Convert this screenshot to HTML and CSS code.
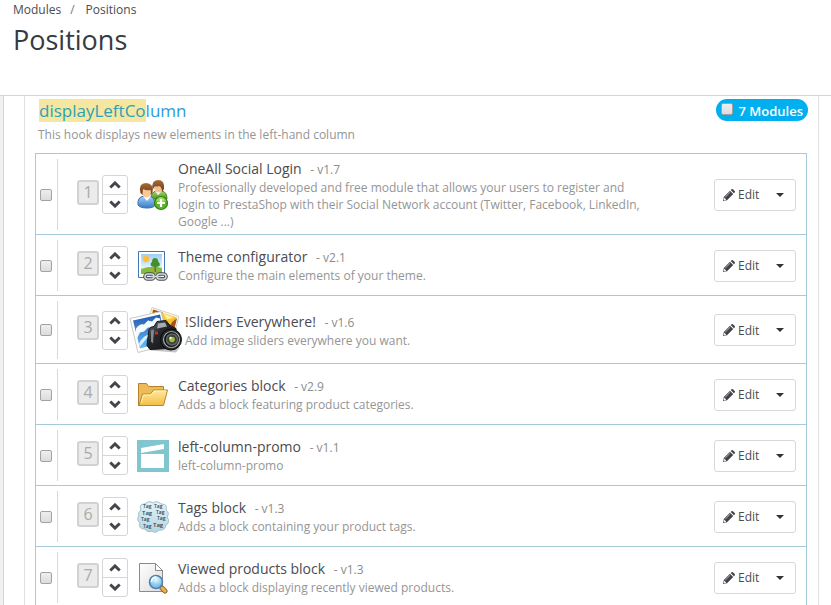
FILE: index.html
```html
<!DOCTYPE html>
<html lang="en">
<head>
  <meta charset="UTF-8" />
  <meta name="viewport" content="width=device-width, initial-scale=1.0" />
  <title>Positions</title>
  <link rel="stylesheet" href="styles.css">
</head>
<body>
  <!-- shared icons -->
  <svg class="sprite" aria-hidden="true">
    <symbol id="up" viewBox="0 0 12 8"><path d="M1.300 6.500 6 1.900l4.700 4.600" fill="none" stroke="#45454d" stroke-width="2.900"/></symbol>
    <symbol id="down" viewBox="0 0 12 8"><path d="M1.300 1.500 6 6.100l4.700-4.600" fill="none" stroke="#45454d" stroke-width="2.900"/></symbol>
    <symbol id="pencil" viewBox="0 0 12 12"><path d="M0 12l.8-4L7 1.800 10.200 5 4 11.200zM7.700 1.100 8.500.3q.7-.6 1.400 0l1.800 1.800q.6.700 0 1.400l-.8.800z" fill="#414149"/><path d="M1.300 9l1.700 1.700-1.500.4-.6-.6zM2.300 8l5-4.900" stroke="#fff" stroke-width=".6" fill="#fff"/></symbol>
  </svg>

  <header class="page-head">
    <nav class="breadcrumb" aria-label="Breadcrumb">
      <a href="#">Modules</a><span class="slash">/</span><a href="#">Positions</a>
    </nav>
    <h1>Positions</h1>
  </header>

  <main class="content">
    <section class="panel">
      <div class="hook-head">
        <h2><a href="#"><mark>displayLeftCo</mark>lumn</a></h2>
        <label class="pill"><input type="checkbox" class="check" /> <span>7 Modules</span></label>
      </div>
      <p class="hook-desc">This hook displays new elements in the left-hand column</p>

      <ul class="modules">
        <li class="module">
          <div class="select"><input type="checkbox" class="check" aria-label="Select OneAll Social Login" /></div>
          <span class="position">1</span>
          <div class="arrows">
            <button type="button" aria-label="Move up"><svg><use href="#up"/></svg></button>
            <button type="button" aria-label="Move down"><svg><use href="#down"/></svg></button>
          </div>
          <svg class="icon" viewBox="0 0 32 32">
            <defs>
              <linearGradient id="hair" x2="0" y2="1"><stop stop-color="#a66b38"/><stop offset="1" stop-color="#6b3a17"/></linearGradient>
              <linearGradient id="blue" x2="0" y2="1"><stop stop-color="#a9d3f8"/><stop offset="1" stop-color="#3779c5"/></linearGradient>
              <linearGradient id="green" x2="0" y2="1"><stop stop-color="#a5d872"/><stop offset="1" stop-color="#4f9226"/></linearGradient>
            </defs>
            <path d="M14 20q0-7 5-8h6q5 1 5 8z" fill="url(#green)" stroke="#518329"/>
            <path d="M18 12l3 4 4-4z" fill="#fff"/>
            <ellipse cx="21.500" cy="8" rx="4.500" ry="5.500" fill="#f4c18e"/>
            <path d="M15.500 11Q14 1 21 1q7 0 6 9l-2 3q0-5-3-6-3 1-4 0z" fill="url(#hair)"/>
            <path d="M1 26q-1-8 6-9h5q6 1 6 9-1 3-8 3t-9-3z" fill="url(#blue)" stroke="#3470b0"/>
            <path d="M6 17l4 5 4-5z" fill="#fff"/>
            <ellipse cx="9.500" cy="12.500" rx="5" ry="6" fill="#f9c995"/>
            <path d="M3.500 14Q1 4 9 4t6.500 10l-2 2q1-3 0-5-5 1-7-1-1 1-1 6z" fill="url(#hair)"/>
            <circle cx="24" cy="24" r="6.500" fill="#59b526" stroke="#32810f" stroke-width="1.200"/>
            <path d="M19 22q2-4 5-4t5 4q-5 2-10 0z" fill="#9adb63"/>
            <path d="M24 20v8m-4-4h8" stroke="#fff" stroke-width="2.200"/>
          </svg>
          <div class="info">
            <h3>OneAll Social Login <small>- v1.7</small></h3>
            <p>Professionally developed and free module that allows your users to register and login to PrestaShop with their Social Network account (Twitter, Facebook, LinkedIn, Google ...)</p>
          </div>
          <div class="actions">
            <button type="button" class="edit"><svg><use href="#pencil"/></svg>Edit</button>
            <button type="button" class="more" aria-label="More actions"></button>
          </div>
        </li>

        <li class="module">
          <div class="select"><input type="checkbox" class="check" aria-label="Select Theme configurator" /></div>
          <span class="position">2</span>
          <div class="arrows">
            <button type="button" aria-label="Move up"><svg><use href="#up"/></svg></button>
            <button type="button" aria-label="Move down"><svg><use href="#down"/></svg></button>
          </div>
          <svg class="icon" viewBox="0 0 32 32">
            <defs>
              <linearGradient id="sky" x2="0" y2="1"><stop stop-color="#9fcef4"/><stop offset="1" stop-color="#e9f7ff"/></linearGradient>
            </defs>
            <path d="M1.500 1.500h26v26h-26z" fill="#fff" stroke="#3d77b8"/>
            <path d="M4 4h21v15H4z" fill="url(#sky)"/>
            <circle cx="9" cy="9" r="3.200" fill="#ffbd3e"/>
            <path d="M4 19q11-4 21-1v6H4z" fill="#87bb3c"/>
            <path d="M17.500 14h1.500v8h-1.500z" fill="#8c5b28"/>
            <path d="M14 16q-1-3 1-4 0-4 3-4t3.500 4q2 1 1 4-4 2-8.500 0z" fill="#428e2f"/>
            <g fill="none" stroke="#484e56" stroke-width="3.600"><rect x="8" y="24" width="9" height="5" rx="2.500"/><rect x="20" y="24" width="9" height="5" rx="2.500"/><path d="M13 26.500h11"/></g>
            <g fill="none" stroke="#d5d8dd" stroke-width="1.500"><rect x="8" y="24" width="9" height="5" rx="2.500"/><rect x="20" y="24" width="9" height="5" rx="2.500"/><path d="M13 26.500h11"/></g>
          </svg>
          <div class="info">
            <h3>Theme configurator <small>- v2.1</small></h3>
            <p>Configure the main elements of your theme.</p>
          </div>
          <div class="actions">
            <button type="button" class="edit"><svg><use href="#pencil"/></svg>Edit</button>
            <button type="button" class="more" aria-label="More actions"></button>
          </div>
        </li>

        <li class="module">
          <div class="select"><input type="checkbox" class="check" aria-label="Select Sliders Everywhere" /></div>
          <span class="position">3</span>
          <div class="arrows">
            <button type="button" aria-label="Move up"><svg><use href="#up"/></svg></button>
            <button type="button" aria-label="Move down"><svg><use href="#down"/></svg></button>
          </div>
          <svg class="icon icon-large" viewBox="0 0 57 57">
            <defs>
              <linearGradient id="deep" x2="0" y2="1"><stop stop-color="#2459b3"/><stop offset="1" stop-color="#64bdf2"/></linearGradient>
              <linearGradient id="sunset" x2="0" y2="1"><stop stop-color="#ffd52e"/><stop offset="1" stop-color="#e5870d"/></linearGradient>
              <linearGradient id="body" x2="1" y2="1"><stop stop-color="#777b82"/><stop offset=".4" stop-color="#25272b"/><stop offset="1" stop-color="#111"/></linearGradient>
            </defs>
            <path d="M25 6l27 9-8 29-27-9z" fill="#fff" stroke="#ccc"/>
            <path d="M26 8l24 8-6 20-25-7z" fill="url(#sunset)"/>
            <path d="M26 8l10 3-6 4 9 1 2 7 9-6-5 20-21-9z" fill="#a3531c"/>
            <path d="M33 11l15 5-5 8-8-3z" fill="#f9c22e"/>
            <path d="M36 12l11 4-7 2z" fill="#fff09a"/>
            <path d="M3 17l31-7 8 33-31 8z" fill="#fff" stroke="#c8c8c8"/>
            <path d="M6 19l27-6 6 27-26 7z" fill="url(#deep)"/>
            <path d="M9 27q4-5 8-4l4-4 4 1 4-4 4 1 1 5-5 0-3 4-5 0-4 4-4 1-4 8z" fill="#f4fbff"/>
            <path d="M12 42q5-9 11-9l-5 6-5 6z" fill="#d7f0ff"/>
            <path d="M23 49l26 2 4-5-24-5z" fill="#555" opacity=".35"/>
            <path d="M22 28q1-3 5-3l3-5 9-1 4 5 6 3 1 16-8 4-19 1-3-4z" fill="url(#body)" stroke="#17181a"/>
            <path d="M31 22l7-1 2 4-10 2z" fill="#a8abb0"/>
            <path d="M24 29l3-1-1 14-2-2z" fill="#858991"/>
            <path d="M28 30h3v3h-3z" fill="#d6281d"/>
            <circle cx="44" cy="38" r="10.500" fill="#25272a" stroke="#07080a"/>
            <circle cx="44.500" cy="38" r="8" fill="#111" stroke="#a5a8ac" stroke-width="1.200"/>
            <circle cx="45" cy="38" r="5.500" fill="#38443d" stroke="#636663" stroke-width="1.500"/>
            <circle cx="45" cy="38" r="2.800" fill="#a7b943"/><circle cx="43.500" cy="36.500" r="1.200" fill="#efffc0"/>
          </svg>
          <div class="info">
            <h3>!Sliders Everywhere! <small>- v1.6</small></h3>
            <p>Add image sliders everywhere you want.</p>
          </div>
          <div class="actions">
            <button type="button" class="edit"><svg><use href="#pencil"/></svg>Edit</button>
            <button type="button" class="more" aria-label="More actions"></button>
          </div>
        </li>

        <li class="module">
          <div class="select"><input type="checkbox" class="check" aria-label="Select Categories block" /></div>
          <span class="position">4</span>
          <div class="arrows">
            <button type="button" aria-label="Move up"><svg><use href="#up"/></svg></button>
            <button type="button" aria-label="Move down"><svg><use href="#down"/></svg></button>
          </div>
          <svg class="icon" viewBox="0 0 32 32">
            <defs>
              <linearGradient id="folder" x2="0" y2="1"><stop stop-color="#ffeb9b"/><stop offset="1" stop-color="#f3bd48"/></linearGradient>
            </defs>
            <path d="M1.500 27V4.500h8l2 3h15v6" fill="#edbb58" stroke="#b9802a"/>
            <path d="M2 26.500L5.500 15h8l3-4h14l-4 15.500z" fill="url(#folder)" stroke="#bd842b"/>
            <path d="M4 24l2.500-8H14l3-4h12" fill="none" stroke="#fff4b9"/>
          </svg>
          <div class="info">
            <h3>Categories block <small>- v2.9</small></h3>
            <p>Adds a block featuring product categories.</p>
          </div>
          <div class="actions">
            <button type="button" class="edit"><svg><use href="#pencil"/></svg>Edit</button>
            <button type="button" class="more" aria-label="More actions"></button>
          </div>
        </li>

        <li class="module">
          <div class="select"><input type="checkbox" class="check" aria-label="Select left-column-promo" /></div>
          <span class="position">5</span>
          <div class="arrows">
            <button type="button" aria-label="Move up"><svg><use href="#up"/></svg></button>
            <button type="button" aria-label="Move down"><svg><use href="#down"/></svg></button>
          </div>
          <svg class="icon" viewBox="0 0 32 32">
            <path d="M0 0h32v32H0z" fill="#81c5cf"/>
            <path d="M4 8l23-4v5L4 13zM4 14h23v14H4z" fill="#fff"/>
          </svg>
          <div class="info">
            <h3>left-column-promo <small>- v1.1</small></h3>
            <p>left-column-promo</p>
          </div>
          <div class="actions">
            <button type="button" class="edit"><svg><use href="#pencil"/></svg>Edit</button>
            <button type="button" class="more" aria-label="More actions"></button>
          </div>
        </li>

        <li class="module">
          <div class="select"><input type="checkbox" class="check" aria-label="Select Tags block" /></div>
          <span class="position">6</span>
          <div class="arrows">
            <button type="button" aria-label="Move up"><svg><use href="#up"/></svg></button>
            <button type="button" aria-label="Move down"><svg><use href="#down"/></svg></button>
          </div>
          <svg class="icon" viewBox="0 0 32 32">
            <defs>
              <linearGradient id="cloud" x2="0" y2="1"><stop stop-color="#e5f3f8"/><stop offset="1" stop-color="#b2d6e4"/></linearGradient>
            </defs>
            <path d="M4 9Q1 3 8 3q4-4 8-1 4-3 8 1 7 0 5 6 4 3 1 7 4 5-1 8-1 6-7 5-4 4-7 1-5 2-7-2-7 0-5-6-4-3-1-7-2-3 2-6z" fill="url(#cloud)" stroke="#a0bec9"/>
            <g class="tag-words">
              <text x="6" y="7" class="tag-small">Tag</text><text x="17" y="7" class="tag-small">Tag</text>
              <text x="5" y="14">Tag</text><text x="19" y="13" class="tag-small">Tag</text>
              <text x="4" y="20" class="tag-small">Tag</text><text x="20" y="19" class="tag-small">Tag</text>
              <text x="6" y="27" class="tag-small">Tag</text><text x="16" y="26">Tag</text>
            </g>
          </svg>
          <div class="info">
            <h3>Tags block <small>- v1.3</small></h3>
            <p>Adds a block containing your product tags.</p>
          </div>
          <div class="actions">
            <button type="button" class="edit"><svg><use href="#pencil"/></svg>Edit</button>
            <button type="button" class="more" aria-label="More actions"></button>
          </div>
        </li>

        <li class="module">
          <div class="select"><input type="checkbox" class="check" aria-label="Select Viewed products block" /></div>
          <span class="position">7</span>
          <div class="arrows">
            <button type="button" aria-label="Move up"><svg><use href="#up"/></svg></button>
            <button type="button" aria-label="Move down"><svg><use href="#down"/></svg></button>
          </div>
          <svg class="icon" viewBox="0 0 32 32">
            <defs>
              <linearGradient id="paper" x2="1" y2="1"><stop stop-color="#fff"/><stop offset="1" stop-color="#dcdcdc"/></linearGradient>
              <radialGradient id="lens" cy=".3"><stop stop-color="#ebfaff"/><stop offset="1" stop-color="#7fc3eb"/></radialGradient>
            </defs>
            <path d="M2.500 1.500h16l7 7v21h-23z" fill="url(#paper)" stroke="#8b8b8b"/>
            <path d="M18.500 1.500v7h7z" fill="#fff" stroke="#8b8b8b"/>
            <path d="M25 26l3 3" stroke="#99652b" stroke-width="5" stroke-linecap="round"/>
            <path d="M25 26l3 3" stroke="#efb34e" stroke-width="3" stroke-linecap="round"/>
            <circle cx="19" cy="20" r="6.500" fill="url(#lens)" stroke="#4e81b1" stroke-width="1.500"/>
            <path d="M14.500 20q0-5 5-5" fill="none" stroke="#fff" stroke-width="1.500"/>
          </svg>
          <div class="info">
            <h3>Viewed products block <small>- v1.3</small></h3>
            <p>Adds a block displaying recently viewed products.</p>
          </div>
          <div class="actions">
            <button type="button" class="edit"><svg><use href="#pencil"/></svg>Edit</button>
            <button type="button" class="more" aria-label="More actions"></button>
          </div>
        </li>
      </ul>
    </section>
  </main>
</body>
</html>
```
FILE: styles.css
```css
* {
  box-sizing: border-box;
}

body {
  margin: 0;
  height: 100vh;
  display: flex;
  flex-direction: column;
  overflow: hidden;
  background: #fff;
  color: #4b4b50;
  font-family: "Open Sans", sans-serif;
  font-size: 12px;
}

h1, h2, h3, p, ul {
  margin: 0;
  padding: 0;
  font-weight: 400;
}

a {
  color: inherit;
  text-decoration: none;
}

button {
  margin: 0;
  padding: 0;
  border: 0;
  background: none;
  color: inherit;
  font: inherit;
  cursor: pointer;
}

.sprite {
  display: none;
}

.page-head {
  flex: none;
  padding: 1px 13px 37px;
  border-bottom: 1px solid #d3d5d8;
}

.breadcrumb {
  line-height: 18px;
}

.slash {
  margin: 0 11px 0 9px;
  color: #777;
}

h1 {
  margin-top: 2px;
  font-size: 27px;
  line-height: 37px;
  color: #363a41;
}

.content {
  flex: 1;
  min-height: 0;
  overflow: hidden;
  margin-left: 3px;
  padding: 0 12px 0 20px;
  border-left: 1px solid #d3d5d8;
  box-shadow: -3px 0 #f0f0f3;
}

.panel {
  padding: 3px 11px 0 10px;
  border: solid #dfdfdf;
  border-width: 0 1px;
}

.hook-head {
  display: flex;
  justify-content: space-between;
  align-items: flex-start;
  margin: 0 -1px 0 4px;
}

h2 {
  font-size: 17px;
  line-height: 23px;
  color: #2f9bd8;
}

mark {
  background: #f5e6a0;
  color: #2ba1b8;
}

.pill {
  display: flex;
  gap: 5px;
  height: 22px;
  padding: 4px 5px;
  border-radius: 11px;
  background: #00aff0;
  color: #fff;
  font-size: 13px;
  font-weight: 600;
  line-height: 17px;
}

.hook-desc {
  margin: 4px 3px 9px;
  line-height: 18px;
  color: #959595;
}

.check {
  appearance: none;
  flex: none;
  width: 12px;
  height: 12px;
  margin: 0;
  border: 1px solid #a2a2a2;
  border-radius: 2px;
  background: linear-gradient(#eee, #dcdcdc);
}

.modules {
  list-style: none;
  border: 1px solid #a6c9dc;
}

.module {
  display: flex;
  align-items: center;
  min-height: 61px;
  padding: 5px 10px 4px 4px;
  border-bottom: 1px solid #a6c9dc;
}

.select {
  display: flex;
  align-items: center;
  align-self: stretch;
  width: 18px;
  border-right: 1px solid #d8d8d8;
}

.position {
  width: 22px;
  height: 25px;
  margin: 0 4px 5px 19px;
  border: 2px solid #d2d2d2;
  border-radius: 3px;
  background: #ebebeb;
  color: #aaa;
  font-size: 16px;
  line-height: 21px;
  text-align: center;
}

.arrows {
  width: 26px;
  margin-left: -1px;
  border: 1px solid #d5d5d5;
  border-radius: 3px;
}

.arrows button {
  display: flex;
  align-items: center;
  justify-content: center;
  width: 100%;
  height: 18px;
}

.arrows button + button {
  height: 19px;
  border-top: 1px solid #d5d5d5;
}

.arrows svg {
  width: 12px;
  height: 8px;
}

.icon {
  flex: none;
  width: 32px;
  height: 32px;
  margin: 0 9px;
}

.icon-large {
  width: 57px;
  height: 58px;
  margin: 0 1px 0 -1px;
}

.tag-words {
  fill: #35434b;
  font-size: 6px;
  font-weight: 600;
}

.tag-small {
  font-size: 5px;
}

.info {
  flex: 1;
  max-width: 465px;
}

h3 {
  font-size: 14px;
  line-height: 19px;
}

h3 small {
  margin-left: 5px;
  font-size: 12px;
  color: #8c8c8c;
}

.info p {
  line-height: 17px;
  color: #959595;
}

.actions {
  display: flex;
  width: 82px;
  height: 32px;
  margin-left: auto;
  border: 1px solid #d8d8d8;
  border-radius: 3px;
}

.edit {
  display: flex;
  align-items: center;
  flex: 1;
  gap: 3px;
  padding-left: 8px;
}

.edit svg {
  width: 12px;
  height: 12px;
}

.more {
  display: flex;
  align-items: center;
  justify-content: center;
  width: 30px;
}

.more::before {
  content: "";
  border: 4px solid transparent;
  border-top-color: #333;
  border-bottom: 0;
}
```
